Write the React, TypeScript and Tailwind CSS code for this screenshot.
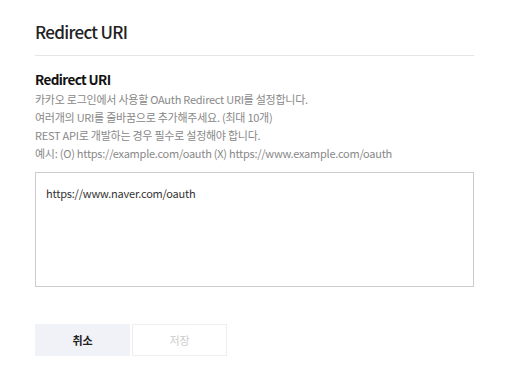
export default function App() {
  return (
    <div className="h-[391px] w-[512px] bg-white px-[35px] pt-[20px] font-['Noto_Sans_CJK_KR','Noto_Sans',sans-serif]">
      <h1 className="text-[17px] font-medium leading-[24px] tracking-[-0.7px] text-[#222]">Redirect URI</h1>
      <div className="mt-[11px] h-px w-[439px] bg-[#e5e5e5]" />
      <div className="mt-[13px]">
        <h2 className="text-[13.5px] font-bold leading-[20px] tracking-[-0.6px] text-[#111]">Redirect URI</h2>
        <div className="mt-[1px] text-[11px] leading-[18px] tracking-[-0.25px] text-[#888]">
          <p>카카오 로그인에서 사용할 OAuth Redirect URI를 설정합니다.</p>
          <p>여러개의 URI를 줄바꿈으로 추가해주세요. (최대 10개)</p>
          <p>REST API로 개발하는 경우 필수로 설정해야 합니다.</p>
          <p>예시: (O) https://example.com/oauth (X) https://www.example.com/oauth</p>
        </div>
        <textarea
          className="mt-[10px] block h-[115px] w-[439px] resize-none border border-[#ccc] px-[10px] py-[12px] text-[11px] leading-[16px] tracking-[-0.2px] text-[#333] outline-none"
          defaultValue="https://www.naver.com/oauth"
        />
      </div>
      <div className="mt-[37px] flex gap-[2px]">
        <button className="h-[32px] w-[95px] bg-[#f1f2f8] text-[11px] font-bold text-[#222]">취소</button>
        <button className="h-[32px] w-[95px] border border-[#eee] text-[11px] text-[#ccc]">저장</button>
      </div>
    </div>
  );
}
